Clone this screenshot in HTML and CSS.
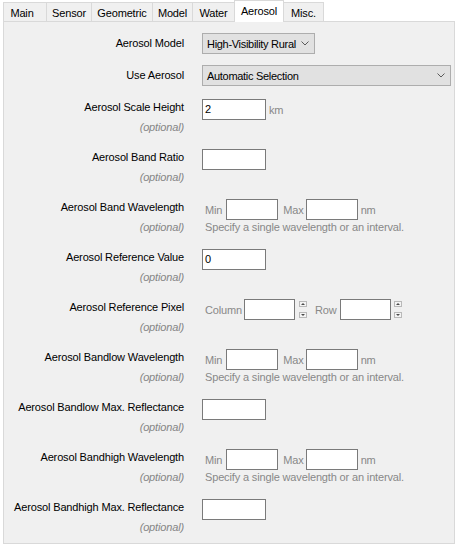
FILE: index.html
```html
<!DOCTYPE html>
<html>
<head>
<meta charset="utf-8">
<link rel="stylesheet" href="styles.css">
</head>
<body>
<div class="window">
  <div class="tabs">
    <div class="tab tab-main">Main</div>
    <div class="tab tab-sensor">Sensor</div>
    <div class="tab tab-geometric">Geometric</div>
    <div class="tab tab-model">Model</div>
    <div class="tab tab-water">Water</div>
    <div class="tab tab-aerosol tab-active">Aerosol</div>
    <div class="tab tab-misc">Misc.</div>
  </div>
  <div class="panel">
    <div class="row row-combo row-first">
      <div class="label-col"><div class="label">Aerosol Model</div></div>
      <div class="ctl">
        <div class="combo combo-model">
          <span>High-Visibility Rural</span>
          <svg class="chev" width="8" height="5" viewBox="0 0 8 5"><polyline points="0.5,0.5 4,4 7.5,0.5" fill="none" stroke="#5a5a5a" stroke-width="1"/></svg>
        </div>
      </div>
    </div>
    <div class="row row-combo row-second">
      <div class="label-col"><div class="label">Use Aerosol</div></div>
      <div class="ctl">
        <div class="combo combo-use">
          <span>Automatic Selection</span>
          <svg class="chev" width="8" height="5" viewBox="0 0 8 5"><polyline points="0.5,0.5 4,4 7.5,0.5" fill="none" stroke="#5a5a5a" stroke-width="1"/></svg>
        </div>
      </div>
    </div>
    <div class="row">
      <div class="label-col"><div class="label">Aerosol Scale Height</div><div class="optional">(optional)</div></div>
      <div class="ctl">
        <div class="line"><div class="input">2</div><span class="muted unit-km">km</span></div>
      </div>
    </div>
    <div class="row">
      <div class="label-col"><div class="label">Aerosol Band Ratio</div><div class="optional">(optional)</div></div>
      <div class="ctl">
        <div class="line"><div class="input"></div></div>
      </div>
    </div>
    <div class="row">
      <div class="label-col"><div class="label">Aerosol Band Wavelength</div><div class="optional">(optional)</div></div>
      <div class="ctl">
        <div class="line">
          <span class="muted word-min">Min</span><div class="input input-small gap-in-min"></div>
          <span class="muted word-max">Max</span><div class="input input-small gap-in-max"></div>
          <span class="muted word-nm">nm</span>
        </div>
        <div class="hint">Specify a single wavelength or an interval.</div>
      </div>
    </div>
    <div class="row">
      <div class="label-col"><div class="label">Aerosol Reference Value</div><div class="optional">(optional)</div></div>
      <div class="ctl">
        <div class="line"><div class="input">0</div></div>
      </div>
    </div>
    <div class="row">
      <div class="label-col"><div class="label">Aerosol Reference Pixel</div><div class="optional">(optional)</div></div>
      <div class="ctl">
        <div class="line">
          <span class="muted word-col">Column</span><div class="input input-pixel gap-in-col"></div>
          <svg class="spin" width="8" height="21" viewBox="0 0 8 21"><rect x="0.5" y="2.5" width="7" height="5" fill="#f4f4f4" stroke="#b9b9b9"/><polygon points="2,6 4,4 6,6" fill="#4a4a4a"/><rect x="0.5" y="13.5" width="7" height="5" fill="#f4f4f4" stroke="#b9b9b9"/><polygon points="2,15 6,15 4,17" fill="#4a4a4a"/></svg>
          <span class="muted word-row">Row</span><div class="input input-pixel gap-in-row"></div>
          <svg class="spin spin-2" width="8" height="21" viewBox="0 0 8 21"><rect x="0.5" y="2.5" width="7" height="5" fill="#f4f4f4" stroke="#b9b9b9"/><polygon points="2,6 4,4 6,6" fill="#4a4a4a"/><rect x="0.5" y="13.5" width="7" height="5" fill="#f4f4f4" stroke="#b9b9b9"/><polygon points="2,15 6,15 4,17" fill="#4a4a4a"/></svg>
        </div>
      </div>
    </div>
    <div class="row">
      <div class="label-col"><div class="label">Aerosol Bandlow Wavelength</div><div class="optional">(optional)</div></div>
      <div class="ctl">
        <div class="line">
          <span class="muted word-min">Min</span><div class="input input-small gap-in-min"></div>
          <span class="muted word-max">Max</span><div class="input input-small gap-in-max"></div>
          <span class="muted word-nm">nm</span>
        </div>
        <div class="hint">Specify a single wavelength or an interval.</div>
      </div>
    </div>
    <div class="row">
      <div class="label-col"><div class="label">Aerosol Bandlow Max. Reflectance</div><div class="optional">(optional)</div></div>
      <div class="ctl">
        <div class="line"><div class="input"></div></div>
      </div>
    </div>
    <div class="row">
      <div class="label-col"><div class="label">Aerosol Bandhigh Wavelength</div><div class="optional">(optional)</div></div>
      <div class="ctl">
        <div class="line">
          <span class="muted word-min">Min</span><div class="input input-small gap-in-min"></div>
          <span class="muted word-max">Max</span><div class="input input-small gap-in-max"></div>
          <span class="muted word-nm">nm</span>
        </div>
        <div class="hint">Specify a single wavelength or an interval.</div>
      </div>
    </div>
    <div class="row">
      <div class="label-col"><div class="label">Aerosol Bandhigh Max. Reflectance</div><div class="optional">(optional)</div></div>
      <div class="ctl">
        <div class="line"><div class="input"></div></div>
      </div>
    </div>
  </div>
</div>
</body>
</html>
```
FILE: styles.css
```css
body {
  margin: 0;
  background: #ffffff;
  font-family: "Liberation Sans", Arial, sans-serif;
  font-size: 11px;
  letter-spacing: -0.15px;
  color: #000000;
}

.window {
  padding: 0 2px 0 3px;
}

.tabs {
  display: flex;
  align-items: flex-end;
  height: 21px;
}

.tab {
  box-sizing: border-box;
  height: 19px;
  border: 1px solid #d9d9d9;
  border-bottom: none;
  border-right: none;
  background: #f0f0f0;
  padding-top: 2px;
  line-height: 16px;
  text-align: center;
  white-space: nowrap;
}

.tab-main { width: 43px; padding-right: 6px; }
.tab-sensor { width: 45px; }
.tab-geometric { width: 61px; }
.tab-model { width: 40px; }
.tab-water { width: 42px; }
.tab-aerosol { width: 50px; }
.tab-misc { width: 40px; border-right: 1px solid #d9d9d9; border-left: none; }

.tab-active {
  height: 22px;
  margin-bottom: -1px;
  background: #ffffff;
  border-right: 1px solid #d9d9d9;
  position: relative;
  z-index: 1;
}

.panel {
  box-sizing: border-box;
  height: 523px;
  border: 1px solid #d9d9d9;
  background: #f0f0f0;
  padding-top: 11px;
  overflow: hidden;
}

.row {
  display: grid;
  grid-template-columns: 180px auto;
  column-gap: 18px;
  height: 50px;
}

.row-first { height: 32px; }
.row-second { height: 34px; }

.label-col {
  text-align: right;
}

.label {
  line-height: 16px;
  white-space: nowrap;
}

.row-combo .label {
  line-height: 21px;
}

.optional {
  margin-top: 4px;
  line-height: 16px;
  font-style: italic;
  color: #858585;
}

.ctl {
  display: flex;
  flex-direction: column;
  align-items: flex-start;
}

.combo {
  box-sizing: border-box;
  height: 21px;
  border: 1px solid #adadad;
  background: #e1e1e1;
  display: flex;
  align-items: center;
  justify-content: space-between;
  padding: 0 5px 0 4px;
  white-space: nowrap;
  letter-spacing: -0.3px;
}

.combo-model { width: 113px; }
.combo-use { width: 249px; }

.chev { display: block; flex: none; }

.line {
  display: flex;
  align-items: center;
  height: 21px;
}

.input {
  box-sizing: border-box;
  width: 64px;
  height: 21px;
  border: 1px solid #7a7a7a;
  background: #ffffff;
  padding-left: 2px;
  line-height: 19px;
}

.input-small { width: 52px; }
.input-pixel { width: 51px; }

.muted { color: #888888; }

.unit-km { margin-left: 3px; }
.word-min { margin-left: 3px; }
.gap-in-min { margin-left: 4px; }
.word-max { margin-left: 5px; }
.gap-in-max { margin-left: 2px; }
.word-nm { margin-left: 3px; }
.word-col { margin-left: 3px; }
.gap-in-col { margin-left: 2px; }
.spin { display: block; margin-left: 4px; }
.word-row { margin-left: 8px; }
.gap-in-row { margin-left: 3px; }
.spin-2 { margin-left: 3px; }

.hint {
  color: #888888;
  line-height: 14px;
  margin-left: 3px;
}
```
